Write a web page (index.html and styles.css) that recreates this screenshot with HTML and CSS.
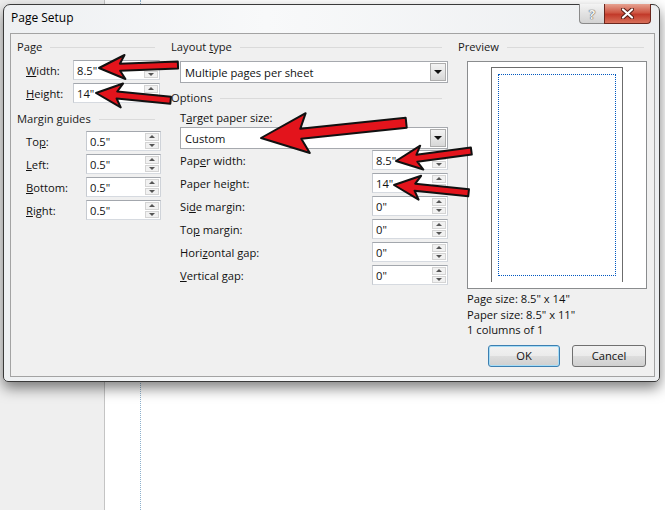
FILE: index.html
```html
<!DOCTYPE html>
<html lang="en">
<head>
    <meta charset="UTF-8">
    <meta name="viewport" content="width=device-width, initial-scale=1.0">
    <title>Page Setup</title>
    <link rel="stylesheet" href="styles.css">
</head>
<body>
    <!-- document window behind the dialog -->
    <div class="desktop">
        <div class="side-pane"></div>
        <div class="page-area"><div class="guide-line"></div></div>
    </div>

    <div class="dialog">
        <div class="title-bar">
            <span class="title">Page Setup</span>
            <div class="caption-buttons">
                <div class="cap-btn help">?</div>
                <div class="cap-btn close">
                    <svg width="13" height="11" viewBox="0 0 13 11">
                        <path d="M2 1.5 L11 9.5 M11 1.5 L2 9.5" stroke="#5a1f17" stroke-width="4.2" stroke-linecap="round"/>
                        <path d="M2 1.5 L11 9.5 M11 1.5 L2 9.5" stroke="#fff" stroke-width="2.2" stroke-linecap="round"/>
                    </svg>
                </div>
            </div>
        </div>

        <div class="content">
            <!-- Page / margins -->
            <div class="col">
                <div class="group-head"><span>Page</span></div>
                <div class="row page-row first">
                    <label><u>W</u>idth:</label>
                    <div class="field"><span class="val">8.5"</span><div class="spin"><span class="up"></span><span class="down"></span></div></div>
                </div>
                <div class="row page-row">
                    <label><u>H</u>eight:</label>
                    <div class="field"><span class="val">14"</span><div class="spin"><span class="up"></span><span class="down"></span></div></div>
                </div>

                <div class="group-head margin-head"><span>Margin guides</span></div>
                <div class="row margin-row first">
                    <label>To<u>p</u>:</label>
                    <div class="field"><span class="val">0.5"</span><div class="spin"><span class="up"></span><span class="down"></span></div></div>
                </div>
                <div class="row margin-row">
                    <label><u>L</u>eft:</label>
                    <div class="field"><span class="val">0.5"</span><div class="spin"><span class="up"></span><span class="down"></span></div></div>
                </div>
                <div class="row margin-row">
                    <label><u>B</u>ottom:</label>
                    <div class="field"><span class="val">0.5"</span><div class="spin"><span class="up"></span><span class="down"></span></div></div>
                </div>
                <div class="row margin-row">
                    <label><u>R</u>ight:</label>
                    <div class="field"><span class="val">0.5"</span><div class="spin"><span class="up"></span><span class="down"></span></div></div>
                </div>
            </div>

            <!-- Layout type / options -->
            <div class="col">
                <div class="group-head"><span>Layout <u>t</u>ype</span></div>
                <div class="select layout-select">
                    <span class="select-text">Multiple pages per sheet</span>
                    <span class="drop-btn"></span>
                </div>

                <div class="group-head options-head"><span>Options</span></div>
                <div class="sub-label">T<u>a</u>rget paper size:</div>
                <div class="select target-select">
                    <span class="select-text">Custom</span>
                    <span class="drop-btn"></span>
                </div>

                <div class="row opt-row first">
                    <label>Pap<u>e</u>r width:</label>
                    <div class="field"><span class="val">8.5"</span><div class="spin"><span class="up"></span><span class="down"></span></div></div>
                </div>
                <div class="row opt-row">
                    <label>Paper hei<u>g</u>ht:</label>
                    <div class="field"><span class="val">14"</span><div class="spin"><span class="up"></span><span class="down"></span></div></div>
                </div>
                <div class="row opt-row">
                    <label>Si<u>d</u>e margin:</label>
                    <div class="field"><span class="val">0"</span><div class="spin"><span class="up"></span><span class="down"></span></div></div>
                </div>
                <div class="row opt-row">
                    <label>To<u>p</u> margin:</label>
                    <div class="field"><span class="val">0"</span><div class="spin"><span class="up"></span><span class="down"></span></div></div>
                </div>
                <div class="row opt-row">
                    <label>Hori<u>z</u>ontal gap:</label>
                    <div class="field"><span class="val">0"</span><div class="spin"><span class="up"></span><span class="down"></span></div></div>
                </div>
                <div class="row opt-row">
                    <label><u>V</u>ertical gap:</label>
                    <div class="field"><span class="val">0"</span><div class="spin"><span class="up"></span><span class="down"></span></div></div>
                </div>
            </div>

            <!-- Preview -->
            <div class="col">
                <div class="group-head"><span>Preview</span></div>
                <div class="preview-box">
                    <div class="preview-page"><div class="preview-margin"></div></div>
                </div>
                <div class="info">
                    <div>Page size: 8.5" x 14"</div>
                    <div>Paper size: 8.5" x 11"</div>
                    <div>1 columns of 1</div>
                </div>
                <div class="buttons">
                    <div class="btn default">OK</div>
                    <div class="btn">Cancel</div>
                </div>
            </div>
        </div>
    </div>

    <!-- red callout arrows drawn over the screenshot -->
    <svg class="arrows" width="665" height="510" viewBox="0 0 665 510">
        <g fill="#e3141c" stroke="#111" stroke-width="2" stroke-linejoin="round">
            <g transform="translate(99 68) rotate(-2.2)">
                <polygon points="0,0 26,-12 21,-3.5 79,-3.5 79,3.5 21,3.5 26,12"/>
            </g>
            <g transform="translate(96 93) rotate(5.5)">
                <polygon points="0,0 26,-12 21,-3.5 75,-3.5 75,3.5 21,3.5 26,12"/>
            </g>
            <g transform="translate(261 138) rotate(-6)">
                <polygon points="0,0 47,-20 40,-5 146,-5 146,5 40,5 47,20"/>
            </g>
            <g transform="translate(396 161) rotate(-7.5)">
                <polygon points="0,0 26,-12 21,-3.5 76,-3.5 76,3.5 21,3.5 26,12"/>
            </g>
            <g transform="translate(394 185) rotate(6)">
                <polygon points="0,0 26,-12 21,-3.5 75,-3.5 75,3.5 21,3.5 26,12"/>
            </g>
        </g>
    </svg>
</body>
</html>
```

FILE: styles.css
```css
body {
    margin: 0;
    width: 665px;
    height: 510px;
    position: relative;
    overflow: hidden;
    font-family: "Open Sans", "Noto Sans", sans-serif;
    font-size: 11.2px;
    color: #111;
}

/* window behind */
.desktop {
    display: flex;
    height: 510px;
}
.side-pane {
    width: 104px;
    background: #efefef;
    border-right: 1px solid #c4c4c4;
}
.page-area {
    flex: 1;
    background: #fff;
}
.guide-line {
    margin-left: 35px;
    height: 100%;
    border-left: 1px dotted #8db0cc;
}

/* dialog frame */
.dialog {
    position: absolute;
    left: 3px;
    top: 4px;
    width: 657px;
    height: 378px;
    box-sizing: border-box;
    border: 1px solid #3a3a3a;
    border-radius: 7px 7px 5px 5px;
    background: linear-gradient(90deg, #eef0f2, #f8f9fa 40%, #eceef0);
    box-shadow: 0 6px 14px rgba(0, 0, 0, 0.5);
    display: flex;
    flex-direction: column;
    padding: 0 4px 4px 6px;
}
.title-bar {
    height: 28px;
    display: flex;
    justify-content: space-between;
    align-items: flex-start;
}
.title {
    padding: 5px 0 0 1px;
    line-height: 16px;
    font-size: 12px;
    color: #000;
}
.caption-buttons {
    display: flex;
    margin: -1px 4px 0 0;
}
.cap-btn {
    height: 20px;
    box-sizing: border-box;
    display: flex;
    align-items: center;
    justify-content: center;
}
.help {
    width: 25px;
    border: 1px solid #8a8a8a;
    border-top: none;
    border-right: none;
    border-radius: 0 0 0 4px;
    background: linear-gradient(#f4f4f4, #e2e2e2 50%, #d3d3d3);
    color: #f4f4f4;
    font-weight: bold;
    font-size: 13px;
    text-shadow: 0 0 1px #444, 0 0 1px #444;
}
.close {
    width: 47px;
    border: 1px solid #6a261d;
    border-top: none;
    border-radius: 0 0 4px 0;
    background: linear-gradient(#e6a291, #cf5845 45%, #c23a2a 55%, #d8705a);
}

/* content panel */
.content {
    flex: 1;
    background: #f0f0f0;
    border: 1px solid #a3a3a3;
    display: grid;
    grid-template-columns: 144px 277px 192px;
    column-gap: 10px;
    padding: 5px 0 0 6px;
}
.col {
    display: flex;
    flex-direction: column;
}
.group-head {
    display: flex;
    align-items: center;
    height: 16px;
    line-height: 16px;
    color: #1a1a1a;
    white-space: nowrap;
}
.group-head::after {
    content: "";
    flex: 1;
    height: 1px;
    background: #dadada;
    margin: 1px 6px 0 8px;
}
.margin-head { margin-top: 8px; }
.options-head { margin-top: 7px; }

.row {
    display: flex;
    align-items: center;
    height: 20px;
    margin-top: 3px;
    padding-left: 9px;
}
.row label {
    white-space: nowrap;
}
.page-row.first { margin-top: 5px; }
.page-row label { width: 47px; }
.page-row .field { width: 87px; }
.margin-row.first { margin-top: 4px; }
.margin-row label { width: 60px; }
.margin-row .field { width: 75px; }
.opt-row.first { margin-top: 1px; }
.opt-row label { flex: 1; }
.opt-row .field { width: 76px; }

/* spin fields */
.field {
    height: 20px;
    box-sizing: border-box;
    display: flex;
    align-items: center;
    background: #fff;
    border: 1px solid #a9adb3;
    border-color: #a3a7ad #cfd3d9 #d6dae0 #c6cad0;
}
.val {
    flex: 1;
    padding-left: 3px;
}
.spin {
    width: 14px;
    height: 16px;
    margin-right: 1px;
    display: flex;
    flex-direction: column;
    gap: 1px;
}
.spin span {
    flex: 1;
    background: #f1f1f1;
    border: 1px solid #d4d4d4;
    box-sizing: border-box;
    display: flex;
    align-items: center;
    justify-content: center;
}
.spin .up::after,
.spin .down::after {
    content: "";
    border-left: 3px solid transparent;
    border-right: 3px solid transparent;
}
.spin .up::after { border-bottom: 3px solid #555; }
.spin .down::after { border-top: 3px solid #555; }

/* dropdowns */
.select {
    height: 22px;
    box-sizing: border-box;
    margin-left: 9px;
    display: flex;
    align-items: center;
    background: #fff;
    border: 1px solid #a6a9ae;
}
.layout-select { margin-top: 6px; }
.target-select { margin-top: 1px; }
.select-text {
    flex: 1;
    padding-left: 4px;
}
.drop-btn {
    width: 16px;
    height: 18px;
    margin-right: 1px;
    box-sizing: border-box;
    border: 1px solid #adadad;
    background: linear-gradient(#f3f3f3, #e6e6e6 50%, #d7d7d7);
    display: flex;
    align-items: center;
    justify-content: center;
}
.drop-btn::after {
    content: "";
    border-left: 4px solid transparent;
    border-right: 4px solid transparent;
    border-top: 4px solid #111;
}
.sub-label {
    margin-top: 4px;
    padding-left: 9px;
    height: 16px;
    line-height: 16px;
}

/* preview */
.preview-box {
    margin: 6px 0 0 9px;
    width: 180px;
    height: 228px;
    box-sizing: border-box;
    background: #fff;
    border: 1px solid #8a8c8e;
    padding: 5px 0 0 23px;
}
.preview-page {
    width: 132px;
    height: 215px;
    box-sizing: border-box;
    border: 1px solid #6c6c6c;
    border-bottom: none;
    padding: 6px 0 0 6px;
}
.preview-margin {
    width: 118px;
    height: 202px;
    box-sizing: border-box;
    border: 1px dotted #0058c0;
}
.info {
    margin: 2px 0 0 9px;
    line-height: 15.5px;
}
.buttons {
    display: flex;
    justify-content: flex-end;
    gap: 12px;
    margin-top: 7px;
    padding-right: 4px;
}
.btn {
    width: 74px;
    height: 22px;
    box-sizing: border-box;
    border: 1px solid #707070;
    border-radius: 3px;
    background: linear-gradient(#f2f2f2, #ebebeb 48%, #dddddd 52%, #cfcfcf);
    display: flex;
    align-items: center;
    justify-content: center;
}
.btn.default {
    width: 72px;
    border-color: #3c7fb1;
    box-shadow: inset 0 0 0 1px #a6dcf6;
}

.arrows {
    position: absolute;
    left: 0;
    top: 0;
    pointer-events: none;
}
```
